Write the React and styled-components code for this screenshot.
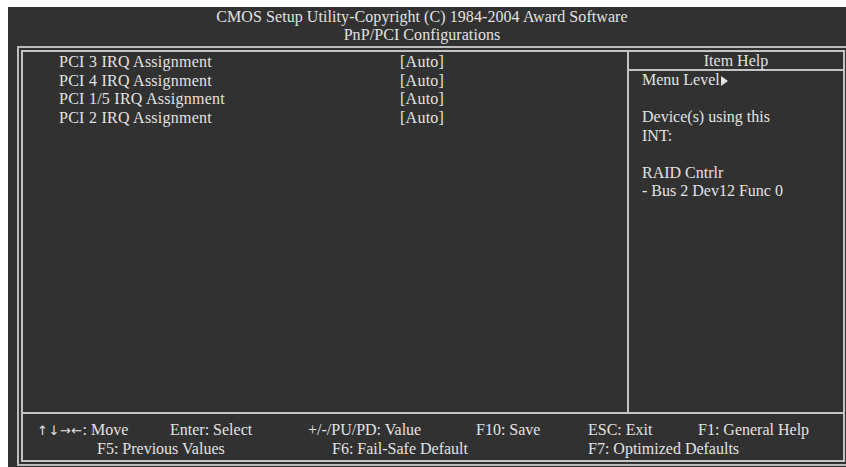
import React from "react";
import styled, { createGlobalStyle } from "styled-components";

const Global = createGlobalStyle`
  body {
    margin: 0;
    background: #ffffff;
  }
`;

const Screen = styled.div`
  margin: 7px 0 0 8px;
  width: 838px;
  height: 460px;
  background: #313131;
  color: #e2e2e2;
  font-family: "Liberation Serif", "Times New Roman", serif;
  font-size: 16px;
  overflow: hidden;
  box-sizing: border-box;
  padding-left: 9px;
`;

const Header = styled.div`
  height: 39px;
  padding: 1px 10px 0 0;
  box-sizing: border-box;
  text-align: center;
  line-height: 18px;
  margin-left: -9px;
  letter-spacing: 0.07px;
`;

const Frame = styled.div`
  width: 832px;
  height: 420px;
  box-sizing: border-box;
  border: 2px solid #bcbcbc;
  padding: 2px;
`;

const Inner = styled.div`
  height: 100%;
  box-sizing: border-box;
  border: 2px solid #c4c4c4;
  display: flex;
  flex-direction: column;
`;

const Main = styled.div`
  flex: 1;
  display: grid;
  grid-template-columns: 1fr 216px;
`;

const Items = styled.div`
  padding: 1px 0 0 36px;
  line-height: 18.5px;
  letter-spacing: 0.25px;
`;

const Row = styled.div`
  display: grid;
  grid-template-columns: 341px auto;
`;

const Help = styled.div`
  border-left: 2px solid #c4c4c4;
  display: flex;
  flex-direction: column;
`;

const HelpTitle = styled.div`
  height: 17px;
  line-height: 18px;
  text-align: center;
  border-bottom: 2px solid #c4c4c4;
`;

const HelpBody = styled.div`
  padding-left: 13px;
  line-height: 18.5px;
`;

const Line = styled.div`
  min-height: 18.5px;
`;

const Footer = styled.div`
  height: 48px;
  box-sizing: border-box;
  border-top: 2px solid #c4c4c4;
  padding: 7px 0 0 14px;
  line-height: 18px;
`;

const KeyRow = styled.div`
  display: grid;
  grid-template-columns: ${(p) => p.$cols};
  padding-left: ${(p) => p.$indent || 0}px;
  white-space: nowrap;
`;

const Arrows = styled.span`
  font-family: "DejaVu Sans", sans-serif;
  font-size: 13px;
  letter-spacing: 0.5px;
`;

const Arrow = styled.svg`
  width: 7px;
  height: 10px;
  margin-left: 1px;
  vertical-align: -1px;
`;

const items = [
  ["PCI 3 IRQ Assignment", "[Auto]"],
  ["PCI 4 IRQ Assignment", "[Auto]"],
  ["PCI 1/5 IRQ Assignment", "[Auto]"],
  ["PCI 2 IRQ Assignment", "[Auto]"],
];

export default function App() {
  return (
    <>
      <Global />
      <Screen>
        <Header>
          <div>CMOS Setup Utility-Copyright (C) 1984-2004 Award Software</div>
          <div>PnP/PCI Configurations</div>
        </Header>
        <Frame>
          <Inner>
            <Main>
              <Items>
                {items.map(([label, value]) => (
                  <Row key={label}>
                    <span>{label}</span>
                    <span>{value}</span>
                  </Row>
                ))}
              </Items>
              <Help>
                <HelpTitle>Item Help</HelpTitle>
                <HelpBody>
                  <Line>
                    Menu Level
                    <Arrow viewBox="0 0 7 10">
                      <path d="M0 0 L7 5 L0 10 Z" fill="#e2e2e2" />
                    </Arrow>
                  </Line>
                  <Line />
                  <Line>Device(s) using this</Line>
                  <Line>INT:</Line>
                  <Line />
                  <Line>RAID Cntrlr</Line>
                  <Line>- Bus 2 Dev12 Func 0</Line>
                </HelpBody>
              </Help>
            </Main>
            <Footer>
              <KeyRow $cols="133px 138px 168px 112px 110px auto">
                <span>
                  <Arrows>↑↓→←</Arrows>: Move
                </span>
                <span>Enter: Select</span>
                <span>+/-/PU/PD: Value</span>
                <span>F10: Save</span>
                <span>ESC: Exit</span>
                <span>F1: General Help</span>
              </KeyRow>
              <KeyRow $cols="235px 256px auto" $indent={60}>
                <span>F5: Previous Values</span>
                <span>F6: Fail-Safe Default</span>
                <span>F7: Optimized Defaults</span>
              </KeyRow>
            </Footer>
          </Inner>
        </Frame>
      </Screen>
    </>
  );
}
